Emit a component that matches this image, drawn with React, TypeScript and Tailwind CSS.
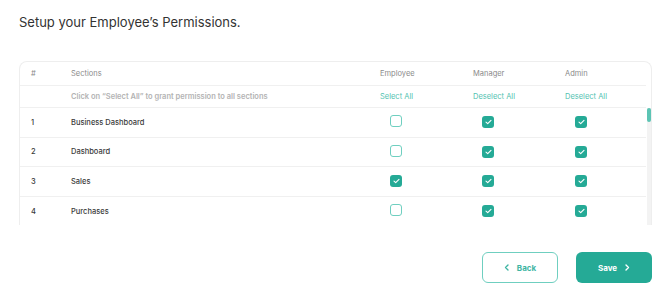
import { useState } from 'react';

type Row = { id: number; name: string; employee: boolean; manager: boolean; admin: boolean };

const Check = ({ on, onClick }: { on: boolean; onClick: () => void }) => (
    <button
        onClick={onClick}
        className={
            on
                ? 'w-[12px] h-[12px] rounded-[3px] bg-[#25aa96] flex items-center justify-center'
                : 'w-[12px] h-[12px] rounded-[3px] border-[1.5px] border-[#6fcfc0] bg-white'
        }
    >
        {on && (
            <svg width="7" height="6" viewBox="0 0 7 6" fill="none">
                <path d="M1 3.2L2.7 4.7L6 1.3" stroke="white" strokeWidth="1.1" strokeLinecap="round" strokeLinejoin="round" />
            </svg>
        )}
    </button>
);

const App = () => {
    const [rows, setRows] = useState<Row[]>([
        { id: 1, name: 'Business Dashboard', employee: false, manager: true, admin: true },
        { id: 2, name: 'Dashboard', employee: false, manager: true, admin: true },
        { id: 3, name: 'Sales', employee: true, manager: true, admin: true },
        { id: 4, name: 'Purchases', employee: false, manager: true, admin: true },
    ]);

    const toggle = (id: number, key: 'employee' | 'manager' | 'admin') => {
        setRows(rows.map((r) => (r.id === id ? { ...r, [key]: !r[key] } : r)));
    };

    const grid = 'grid grid-cols-[40px_309px_93px_92px_1fr] items-center';

    return (
        <div className="min-h-screen bg-white pl-[19px] pr-[18px] pt-[12px] font-['Inter',sans-serif]">
            <h1 className="text-[13px] text-[#333] leading-[20px]">Setup your Employee’s Permissions.</h1>

            <div className="mt-[29px] border border-[#eeeeee] border-b-0 rounded-t-[8px] h-[164px] overflow-hidden flex flex-col">
                <div className={`${grid} h-[24px] pl-[11px] mr-[5px] border-b border-[#f0f0f0] text-[7.5px] text-[#8a8a8a]`}>
                    <span>#</span>
                    <span>Sections</span>
                    <span>Employee</span>
                    <span>Manager</span>
                    <span>Admin</span>
                </div>
                <div className={`${grid} h-[22px] pl-[11px] mr-[5px] border-b border-[#f0f0f0] text-[7.5px]`}>
                    <span></span>
                    <span className="font-semibold text-[#b3b3b3]">Click on “Select All” to grant permission to all sections</span>
                    <span className="text-[#52c2b1]">Select All</span>
                    <span className="text-[#52c2b1]">Deselect All</span>
                    <span className="text-[#52c2b1]">Deselect All</span>
                </div>
                <div className="flex flex-1 min-h-0">
                    <div className="flex-1 overflow-hidden">
                        {rows.map((r) => (
                            <div key={r.id} className={`${grid} h-[29.5px] pl-[11px] border-b border-[#f0f0f0] last:border-b-0 text-[7.5px] font-medium text-[#3a3a3a]`}>
                                <span>{r.id}</span>
                                <span>{r.name}</span>
                                <div className="pl-[10px]">
                                    <Check on={r.employee} onClick={() => toggle(r.id, 'employee')} />
                                </div>
                                <div className="pl-[9px]">
                                    <Check on={r.manager} onClick={() => toggle(r.id, 'manager')} />
                                </div>
                                <div className="pl-[10px]">
                                    <Check on={r.admin} onClick={() => toggle(r.id, 'admin')} />
                                </div>
                            </div>
                        ))}
                    </div>
                    <div className="w-[4px] ml-[1px] bg-[#f3f3f3]">
                        <div className="h-[14px] rounded-full bg-[#5cc4b4]"></div>
                    </div>
                </div>
            </div>

            <div className="flex justify-end gap-[18px] mt-[27px]">
                <button className="w-[76px] h-[31px] rounded-[6px] border-[1.5px] border-[#6fcfc0] flex items-center justify-center gap-[8px] text-[8px] font-bold text-[#3fb5a3]">
                    <svg width="5" height="7" viewBox="0 0 5 7" fill="none">
                        <path d="M4 1L1.5 3.5L4 6" stroke="#3fb5a3" strokeWidth="1.4" strokeLinecap="round" strokeLinejoin="round" />
                    </svg>
                    Back
                </button>
                <button className="w-[76px] h-[31px] rounded-[6px] bg-[#25aa96] flex items-center justify-center gap-[8px] text-[8px] font-bold text-white">
                    Save
                    <svg width="5" height="7" viewBox="0 0 5 7" fill="none">
                        <path d="M1 1L3.5 3.5L1 6" stroke="white" strokeWidth="1.4" strokeLinecap="round" strokeLinejoin="round" />
                    </svg>
                </button>
            </div>
        </div>
    );
};

export default App;
